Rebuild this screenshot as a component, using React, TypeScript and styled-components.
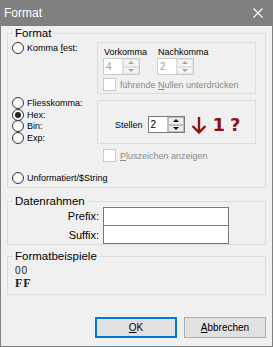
import styled, { createGlobalStyle } from 'styled-components';

const GlobalStyle = createGlobalStyle`
    * {
        margin: 0;
        padding: 0;
        box-sizing: border-box;
    }

    body {
        background-color: #f0f0f0;
        font-family: "Liberation Sans", Arial, sans-serif;
        font-size: 9px;
        color: #000;
    }
`;

const RED = '#8e1010';

const Radio = ({ checked }: { checked?: boolean }) => (
    <RadioCircle>{checked && <RadioDot />}</RadioCircle>
);

const Spin = ({ value, disabled }: { value: string; disabled?: boolean }) => (
    <SpinBox $disabled={disabled}>
        <SpinValue $disabled={disabled}>{value}</SpinValue>
        <SpinButtons $disabled={disabled}>
            <SpinBtn $disabled={disabled}><Tri $up $disabled={disabled} /></SpinBtn>
            <SpinBtn $disabled={disabled}><Tri $disabled={disabled} /></SpinBtn>
        </SpinButtons>
    </SpinBox>
);

const App = () => {
    return (
        <>
            <GlobalStyle />
            <Window>
                <TitleBar>
                    <span>Format</span>
                    <svg width="10" height="10" viewBox="0 0 10 10">
                        <path d="M0.5 0.5 L9.5 9.5 M9.5 0.5 L0.5 9.5" stroke="#fff" strokeWidth="1.1" />
                    </svg>
                </TitleBar>
                <Body>
                    <Group>
                        <GroupTitle>Format</GroupTitle>
                        <FormatContent>
                            <TopSection>
                                <LeftCol>
                                    <RadioRow>
                                        <Radio />
                                        <span>Komma <Key>f</Key>est:</span>
                                    </RadioRow>
                                    <RadioList>
                                        <RadioRow><Radio /><span>Fliesskomma:</span></RadioRow>
                                        <RadioRow><Radio checked /><span>Hex:</span></RadioRow>
                                        <RadioRow><Radio /><span>Bin:</span></RadioRow>
                                        <RadioRow><Radio /><span>Exp:</span></RadioRow>
                                    </RadioList>
                                </LeftCol>
                                <RightCol>
                                    <DigitsBox>
                                        <SpinGrid>
                                            <SpinLabel>Vorkomma</SpinLabel>
                                            <SpinLabel>Nachkomma</SpinLabel>
                                            <Spin value="4" disabled />
                                            <Spin value="2" disabled />
                                        </SpinGrid>
                                        <CheckRow>
                                            <CheckBox />
                                            <span>führende <Key>N</Key>ullen unterdrücken</span>
                                        </CheckRow>
                                    </DigitsBox>
                                    <PlacesBox>
                                        <span>Stellen</span>
                                        <Spin value="2" />
                                        <svg width="16" height="18" viewBox="0 0 16 18" style={{ margin: '0 1px' }}>
                                            <path d="M8 1 V16.5 M1.5 10 L8 16.5 L14.5 10" stroke={RED} strokeWidth="2.4" fill="none" />
                                        </svg>
                                        <BigMark>1</BigMark>
                                        <BigMark>?</BigMark>
                                    </PlacesBox>
                                    <CheckRow $indent>
                                        <CheckBox />
                                        <span><Key>P</Key>luszeichen anzeigen</span>
                                    </CheckRow>
                                </RightCol>
                            </TopSection>
                            <RadioRow $spaced>
                                <Radio />
                                <span>Unformatiert/$String</span>
                            </RadioRow>
                        </FormatContent>
                    </Group>

                    <Group $top={13}>
                        <GroupTitle>Datenrahmen</GroupTitle>
                        <FieldGrid>
                            <FieldLabel>Prefix:</FieldLabel>
                            <TextBox />
                            <FieldLabel>Suffix:</FieldLabel>
                            <TextBox $joined />
                        </FieldGrid>
                    </Group>

                    <Group $top={11}>
                        <GroupTitle>Formatbeispiele</GroupTitle>
                        <Samples>
                            <SampleLine>00</SampleLine>
                            <SampleLine $bold>FF</SampleLine>
                        </Samples>
                    </Group>

                    <Footer>
                        <Button $default><Key>O</Key>K</Button>
                        <Button><Key>A</Key>bbrechen</Button>
                    </Footer>
                </Body>
            </Window>
        </>
    );
};

const Window = styled.div`
    width: 273px;
    height: 347px;
    border: 1px solid #808080;
    background-color: #f0f0f0;
    display: flex;
    flex-direction: column;
`;

const TitleBar = styled.div`
    height: 25px;
    background-color: #808080;
    color: #fff;
    font-size: 12px;
    display: flex;
    align-items: center;
    justify-content: space-between;
    padding: 0 9px 1px 3px;
`;

const Body = styled.div`
    flex: 1;
    display: flex;
    flex-direction: column;
    padding: 7px 6px 8px 6px;
`;

const Group = styled.section<{ $top?: number }>`
    position: relative;
    border: 1px solid #dcdcdc;
    margin-top: ${p => p.$top ?? 0}px;
`;

const GroupTitle = styled.span`
    position: absolute;
    top: -7px;
    left: 5px;
    padding: 0 2px;
    background-color: #f0f0f0;
    font-size: 11.5px;
    line-height: 13px;
`;

const Key = styled.span`
    text-decoration: underline;
`;

const FormatContent = styled.div`
    padding: 8px 9px 3px 4px;
    display: flex;
    flex-direction: column;
`;

const TopSection = styled.div`
    display: grid;
    grid-template-columns: 85px 159px;
`;

const LeftCol = styled.div`
    display: flex;
    flex-direction: column;
`;

const RadioList = styled.div`
    margin-top: 43px;
    display: grid;
    grid-auto-rows: 11.7px;
`;

const RadioRow = styled.div<{ $spaced?: boolean }>`
    display: flex;
    align-items: center;
    gap: 3px;
    height: 12px;
    line-height: 12px;
    white-space: nowrap;
    margin-top: ${p => (p.$spaced ? 10 : 0)}px;
`;

const RadioCircle = styled.span`
    width: 12px;
    height: 12px;
    flex: none;
    border: 1px solid #333;
    border-radius: 50%;
    background-color: #fff;
    display: flex;
    align-items: center;
    justify-content: center;
`;

const RadioDot = styled.span`
    width: 6px;
    height: 6px;
    border-radius: 50%;
    background-color: #222;
`;

const RightCol = styled.div`
    display: flex;
    flex-direction: column;
`;

const DigitsBox = styled.div`
    height: 52px;
    border: 1px solid #dcdcdc;
    padding: 4px 0 0 5px;
`;

const SpinGrid = styled.div`
    display: grid;
    grid-template-columns: 54px 54px;
    grid-template-rows: 11px 17px;
`;

const SpinLabel = styled.span`
    padding-left: 1px;
    line-height: 11px;
    white-space: nowrap;
`;

const SpinBox = styled.div<{ $disabled?: boolean }>`
    width: 37px;
    height: 17px;
    border: 1px solid ${p => (p.$disabled ? '#cccccc' : '#7a7a7a')};
    background-color: #fff;
    display: flex;
`;

const SpinValue = styled.span<{ $disabled?: boolean }>`
    flex: 1;
    padding-left: 2px;
    font-size: 10px;
    line-height: 15px;
    color: ${p => (p.$disabled ? '#a0a0a0' : '#000')};
`;

const SpinButtons = styled.div<{ $disabled?: boolean }>`
    width: 17px;
    display: flex;
    flex-direction: column;
    border-left: 1px solid ${p => (p.$disabled ? '#dedede' : '#c4c4c4')};
`;

const SpinBtn = styled.span<{ $disabled?: boolean }>`
    flex: 1;
    display: flex;
    align-items: center;
    justify-content: center;
    background-color: ${p => (p.$disabled ? '#f4f4f4' : '#ececec')};
    border: 1px solid ${p => (p.$disabled ? '#e2e2e2' : '#bcbcbc')};
`;

const Tri = styled.span<{ $up?: boolean; $disabled?: boolean }>`
    width: 0;
    height: 0;
    border-left: 3px solid transparent;
    border-right: 3px solid transparent;
    ${p => (p.$up ? 'border-bottom' : 'border-top')}: 3px solid ${p => (p.$disabled ? '#a8a8a8' : '#111')};
`;

const CheckRow = styled.div<{ $indent?: boolean }>`
    display: flex;
    align-items: center;
    gap: 4px;
    height: 13px;
    margin-top: ${p => (p.$indent ? 5 : 3)}px;
    margin-left: ${p => (p.$indent ? 6 : 0)}px;
    color: #8a8a8a;
    white-space: nowrap;
`;

const CheckBox = styled.span`
    width: 13px;
    height: 13px;
    flex: none;
    border: 1px solid #cccccc;
    background-color: #fff;
`;

const PlacesBox = styled.div`
    height: 44px;
    margin-top: 6px;
    border: 1px solid #dcdcdc;
    padding: 15px 0 0 17px;
    display: flex;
    align-items: flex-start;
    gap: 5px;

    & > span:first-child {
        line-height: 18px;
    }
`;

const BigMark = styled.span`
    color: ${RED};
    font-family: "DejaVu Sans", Verdana, sans-serif;
    font-weight: bold;
    font-size: 18px;
    line-height: 18px;
`;

const FieldGrid = styled.div`
    padding-top: 5px;
    display: grid;
    grid-template-columns: 91px 126px;
    grid-template-rows: 19px 18px;
    column-gap: 4px;
`;

const FieldLabel = styled.span`
    font-size: 11px;
    line-height: 19px;
    text-align: right;
`;

const TextBox = styled.div<{ $joined?: boolean }>`
    border: 1px solid #7a7a7a;
    border-top: ${p => (p.$joined ? 'none' : '1px solid #7a7a7a')};
    background-color: #fff;
`;

const Samples = styled.div`
    padding: 8px 0 5px 7px;
`;

const SampleLine = styled.div<{ $bold?: boolean }>`
    height: 12px;
    line-height: 12px;
    font-family: ${p => (p.$bold ? '"Liberation Serif", serif' : '"Liberation Sans", Arial, sans-serif')};
    font-weight: ${p => (p.$bold ? 'bold' : 'normal')};
    font-size: ${p => (p.$bold ? 12 : 10)}px;
    letter-spacing: 1px;
    color: #222;
`;

const Footer = styled.div`
    margin-top: 22px;
    display: flex;
    justify-content: flex-end;
    gap: 7px;
`;

const Button = styled.button<{ $default?: boolean }>`
    width: 82px;
    height: 21px;
    background-color: #e1e1e1;
    border: ${p => (p.$default ? '2px solid #0078d7' : '1px solid #adadad')};
    font-family: "Liberation Sans", Arial, sans-serif;
    font-size: 10px;
    color: #000;
`;

export default App;
